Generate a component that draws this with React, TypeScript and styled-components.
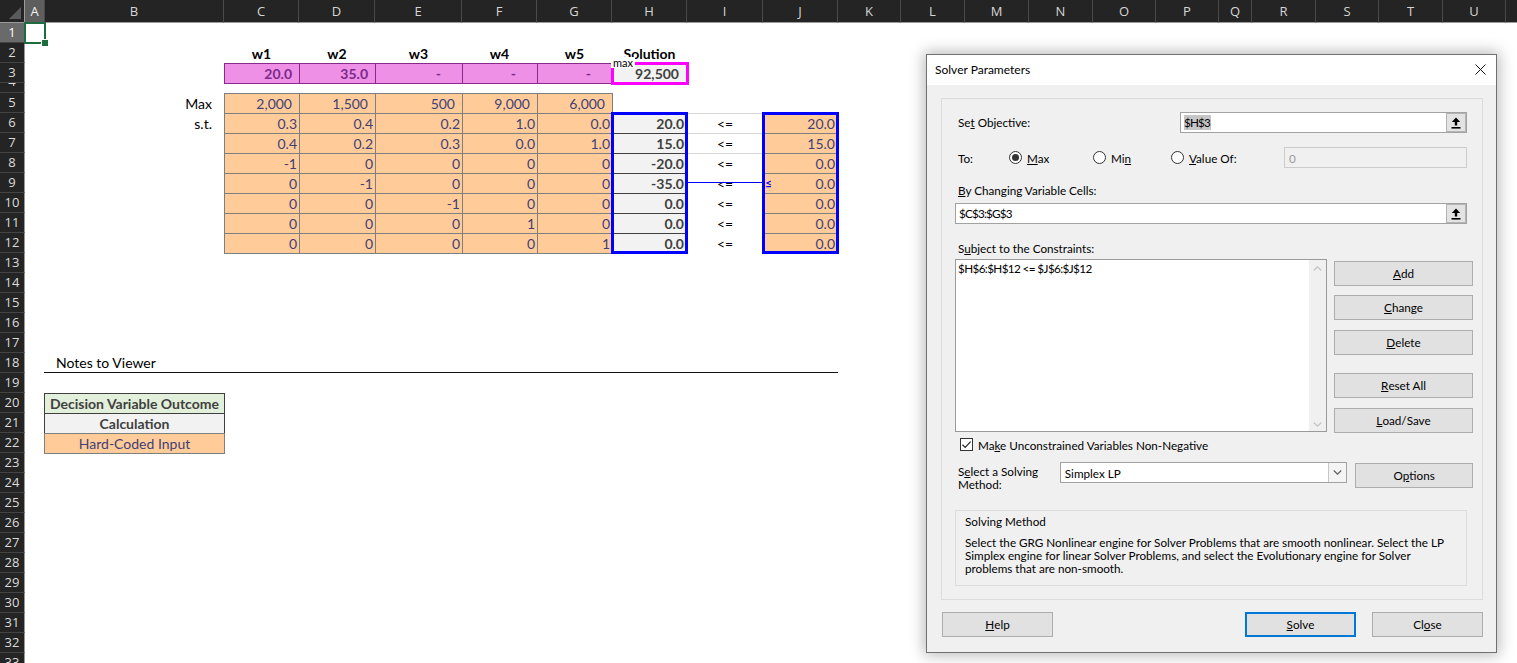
import React from "react";
import styled, { createGlobalStyle, css } from "styled-components";

const SHEET_FONT = `Lato, "Liberation Sans", sans-serif`;
const HEAD_FONT = `"Open Sans", "Noto Sans", sans-serif`;
const UI_FONT = `Lato, "Noto Sans", sans-serif`;

const COLS = ["A", "B", "C", "D", "E", "F", "G", "H", "I", "J", "K", "L", "M", "N", "O", "P", "Q", "R", "S", "T", "U", "V"];
const WIDTHS = [20, 179, 75, 76, 87, 75, 75, 75, 76, 75, 63, 64, 64, 64, 63, 63, 33, 64, 63, 64, 63, 64];
const ROWS = Array.from({ length: 33 }, (_, i) => i + 1);
const rowH = (r: number) => (r === 4 ? 10 : 20);
const colIndex = (c: string) => COLS.indexOf(c) + 2;

const GlobalStyle = createGlobalStyle`
  html, body { margin: 0; padding: 0; background: #fff; overflow: hidden; }
  body { font-family: ${SHEET_FONT}; }
  * { box-sizing: border-box; }
`;

type Pos = { $r: number; $c: string; $span?: number; $rows?: number };
const placed = css<Pos>`
  grid-row: ${(p) => p.$r + 1} / span ${(p) => p.$rows ?? 1};
  grid-column: ${(p) => colIndex(p.$c)} / span ${(p) => p.$span ?? 1};
`;

const Page = styled.div`
  position: relative;
  width: 1517px;
  height: 663px;
  overflow: hidden;
  background: #fff;
`;

const Sheet = styled.div`
  display: grid;
  grid-template-columns: 25px ${WIDTHS.map((w) => `${w}px`).join(" ")};
  grid-template-rows: 23px ${ROWS.map((r) => `${rowH(r)}px`).join(" ")};
  font-family: ${SHEET_FONT};
  font-size: 14px;
`;

const Corner = styled.div`
  grid-row: 1;
  grid-column: 1;
  background: #242424;
  border-right: 1px solid #9a9a9a;
  border-bottom: 1px solid #9a9a9a;
  display: flex;
  align-items: flex-end;
  justify-content: flex-end;
  padding: 0 3px 3px 0;
`;

const ColHeader = styled.div<{ $col: number; $active?: boolean }>`
  grid-row: 1;
  grid-column: ${(p) => p.$col};
  background: ${(p) => (p.$active ? "#5e5e5e" : "#242424")};
  color: ${(p) => (p.$active ? "#f2f2f2" : "#d6d6d6")};
  border-right: 1px solid #4a4a4a;
  border-bottom: 1px solid #9a9a9a;
  font-family: ${HEAD_FONT};
  font-size: 13px;
  display: flex;
  align-items: center;
  justify-content: center;
  overflow: hidden;
`;

const RowHeader = styled.div<{ $row: number; $active?: boolean; $tiny?: boolean }>`
  grid-row: ${(p) => p.$row};
  grid-column: 1;
  background: ${(p) => (p.$active ? "#6a6a6a" : "#242424")};
  color: ${(p) => (p.$active ? "#ffffff" : "#dcdcdc")};
  border-bottom: 1px solid #444;
  border-right: 1px solid #9a9a9a;
  font-family: ${HEAD_FONT};
  font-size: 13px;
  display: flex;
  justify-content: center;
  align-items: ${(p) => (p.$tiny ? "flex-end" : "center")};
  overflow: hidden;
  & > span {
    line-height: ${(p) => (p.$tiny ? "22px" : "19px")};
  }
`;

const ActiveCell = styled.div<Pos>`
  ${placed};
  margin: -1px -1px -1px -1px;
  border: 2px solid #1d6b3f;
  position: relative;
  z-index: 3;
  &::after {
    content: "";
    position: absolute;
    right: -5px;
    bottom: -5px;
    width: 6px;
    height: 6px;
    background: #1d6b3f;
    border: 1px solid #fff;
  }
`;

const ColTitle = styled.div<Pos>`
  ${placed};
  display: flex;
  align-items: center;
  justify-content: center;
  font-weight: 700;
  color: #000;
`;

const RowLabel = styled.div<Pos>`
  ${placed};
  display: flex;
  align-items: center;
  justify-content: flex-end;
  padding-right: 12px;
  color: #000;
`;

const boxCell = css<Pos & { $pad?: number }>`
  ${placed};
  margin: 0 -1px -1px 0;
  display: flex;
  align-items: center;
  justify-content: flex-end;
  padding-right: ${(p) => p.$pad ?? 3}px;
  white-space: nowrap;
`;

const DecisionCell = styled.div<Pos & { $pad?: number }>`
  ${boxCell};
  background: #ef90e7;
  border: 1px solid #8a2a88;
  color: #7a2a8a;
  font-weight: 700;
`;

const InputCell = styled.div<Pos & { $pad?: number }>`
  ${boxCell};
  background: #ffcc99;
  border: 1px solid #7f7f7f;
  color: #3f3f76;
`;

const CalcCell = styled.div<Pos & { $pad?: number }>`
  ${boxCell};
  background: #f2f2f2;
  border: 1px solid #3f3f3f;
  color: #3f3f3f;
  font-weight: 700;
`;

const OpCell = styled.div<Pos & { $lined?: boolean }>`
  ${placed};
  margin: 0 0 -1px 0;
  display: flex;
  align-items: center;
  justify-content: center;
  color: #000;
  border-top: 1px solid ${(p) => (p.$lined ? "#d6d6d6" : "transparent")};
  border-bottom: 1px solid ${(p) => (p.$lined ? "#d6d6d6" : "transparent")};
`;

const LeSign = styled.span`
  margin-right: auto;
  margin-left: 1px;
  color: #0000ff;
  font-weight: 700;
  font-size: 12px;
  line-height: 12px;
`;

const RangeFrame = styled.div<Pos & { $color: string; $wide?: boolean }>`
  ${placed};
  margin: ${(p) => (p.$wide ? "-1px -2px -2px -1px" : "-1px")};
  border: 3px solid ${(p) => p.$color};
  z-index: 2;
  pointer-events: none;
`;

const Connector = styled.div<Pos>`
  ${placed};
  align-self: center;
  height: 1px;
  margin-top: -1px;
  background: #0000ff;
  z-index: 3;
`;

const Tag = styled.div<Pos>`
  ${placed};
  align-self: start;
  justify-self: start;
  margin: -6px 0 0 -1px;
  padding: 0 2px;
  background: #fff;
  font-size: 11px;
  line-height: 11px;
  height: 11px;
  color: #000;
  z-index: 4;
`;

const NotesCell = styled.div<Pos>`
  ${placed};
  margin-left: -1px;
  border-bottom: 1px solid #111;
  display: flex;
  align-items: center;
  padding-left: 12px;
  color: #000;
`;

const legendKinds = {
  outcome: { bg: "#e2efda", border: "#3f3f3f", color: "#3f3f3f", weight: 700 },
  calc: { bg: "#f2f2f2", border: "#3f3f3f", color: "#3f3f3f", weight: 700 },
  input: { bg: "#ffcc99", border: "#7f7f7f", color: "#3f3f76", weight: 400 },
};

const LegendCell = styled.div<Pos & { $kind: keyof typeof legendKinds }>`
  ${placed};
  margin: 0 -1px -1px -1px;
  display: flex;
  align-items: center;
  justify-content: center;
  background: ${(p) => legendKinds[p.$kind].bg};
  border: 1px solid ${(p) => legendKinds[p.$kind].border};
  color: ${(p) => legendKinds[p.$kind].color};
  font-weight: ${(p) => legendKinds[p.$kind].weight};
  white-space: nowrap;
`;

/* ---------------- Dialog ---------------- */

const Dialog = styled.section`
  position: absolute;
  left: 926px;
  top: 54px;
  width: 571px;
  height: 599px;
  border: 1px solid #707070;
  background: #f0f0f0;
  box-shadow: 0 0 14px 2px rgba(0, 0, 0, 0.28);
  display: flex;
  flex-direction: column;
  font-family: ${UI_FONT};
  font-size: 11.7px;
  color: #000;
  z-index: 10;
`;

const TitleBar = styled.header`
  height: 30px;
  background: #fff;
  display: flex;
  align-items: center;
  justify-content: space-between;
  padding: 0 10px 2px 8px;
`;

const Title = styled.span`
  font-size: 12px;
`;

const DialogBody = styled.div`
  flex: 1;
  display: flex;
  flex-direction: column;
  padding: 13px 13px 0 14px;
`;

const Group = styled.div`
  height: 502px;
  border: 1px solid #dcdcdc;
  padding: 13px 9px 0 13px;
  display: flex;
  flex-direction: column;
`;

const ObjectiveRow = styled.div`
  display: grid;
  grid-template-columns: 225px 1fr;
  align-items: center;
  height: 21px;
  margin-right: 6px;
`;

const FieldLabel = styled.span`
  padding: 0 0 2px 3px;
  white-space: nowrap;
`;

const RefEdit = styled.div<{ $top?: number }>`
  height: 21px;
  margin-top: ${(p) => p.$top ?? 0}px;
  margin-right: ${(p) => (p.$top !== undefined ? 6 : 0)}px;
  background: #fff;
  border: 1px solid #a2a2a2;
  display: flex;
  align-items: center;
  padding-left: 3px;
`;

const RefText = styled.span<{ $selected?: boolean }>`
  flex: 1;
  display: flex;
  letter-spacing: -0.8px;
  & > span {
    background: ${(p) => (p.$selected ? "#c6c6c6" : "transparent")};
    line-height: 15px;
    padding-right: 1px;
  }
`;

const RefButton = styled.span`
  width: 20px;
  height: 19px;
  background: #e3e3e3;
  border: 1px solid #b4b4b4;
  display: flex;
  align-items: center;
  justify-content: center;
`;

const ToRow = styled.div`
  margin-top: 14px;
  height: 21px;
  display: flex;
  align-items: center;
  margin-right: 6px;
`;

const ToLabel = styled.span`
  width: 54px;
  padding-left: 3px;
`;

const RadioOption = styled.label<{ $w: number }>`
  width: ${(p) => p.$w}px;
  display: flex;
  align-items: center;
  gap: 5px;
  white-space: nowrap;
`;

const RadioDot = styled.span<{ $on?: boolean }>`
  width: 13px;
  height: 13px;
  border-radius: 50%;
  border: 1px solid #333;
  background: #fff;
  display: flex;
  align-items: center;
  justify-content: center;
  &::after {
    content: "";
    width: 7px;
    height: 7px;
    border-radius: 50%;
    background: ${(p) => (p.$on ? "#333" : "transparent")};
  }
`;

const DisabledInput = styled.div`
  flex: 1;
  height: 21px;
  border: 1px solid #cccccc;
  background: #f0f0f0;
  color: #9a9a9a;
  display: flex;
  align-items: center;
  padding-left: 4px;
`;

const SectionLabel = styled.div<{ $top: number }>`
  margin-top: ${(p) => p.$top}px;
  height: 16px;
  line-height: 16px;
  padding-left: 3px;
`;

const ConstraintArea = styled.div`
  margin-top: 3px;
  display: flex;
  gap: 7px;
  height: 175px;
`;

const ListBox = styled.div`
  width: 372px;
  height: 173px;
  background: #fff;
  border: 1px solid #9a9a9a;
  display: flex;
`;

const ListItems = styled.div`
  flex: 1;
  padding: 1px 0 0 2px;
  line-height: 15px;
  white-space: nowrap;
  letter-spacing: -0.6px;
`;

const ScrollTrack = styled.div`
  width: 17px;
  background: #f0f0f0;
  display: flex;
  flex-direction: column;
  justify-content: space-between;
  align-items: center;
  padding: 6px 0 4px;
`;

const ButtonColumn = styled.div`
  flex: 1;
  display: flex;
  flex-direction: column;
  padding-top: 2px;
`;

const Button = styled.button<{ $gap?: number; $focus?: boolean; $w?: number }>`
  height: 25px;
  width: ${(p) => (p.$w ? `${p.$w}px` : "100%")};
  margin-top: ${(p) => p.$gap ?? 0}px;
  background: #e1e1e1;
  border: ${(p) => (p.$focus ? "2px solid #0078d7" : "1px solid #adadad")};
  font-family: ${UI_FONT};
  font-size: 11.7px;
  color: #000;
  padding: 0 0 2px;
  display: flex;
  align-items: center;
  justify-content: center;
`;

const OptionsButton = styled(Button)`
  margin-left: 8px;
  margin-top: 1px;
`;

const CheckRow = styled.div`
  margin-top: 3px;
  height: 15px;
  display: flex;
  align-items: center;
  gap: 5px;
  padding-left: 5px;
`;

const CheckBox = styled.span`
  width: 13px;
  height: 13px;
  border: 1px solid #333;
  background: #fff;
  display: flex;
  align-items: center;
  justify-content: center;
`;

const MethodRow = styled.div`
  margin-top: 10px;
  display: flex;
  align-items: flex-start;
  height: 26px;
`;

const MethodLabel = styled.div`
  width: 105px;
  padding: 3px 0 0 3px;
  line-height: 13px;
`;

const Select = styled.div`
  width: 288px;
  height: 21px;
  background: #fff;
  border: 1px solid #a2a2a2;
  display: flex;
  align-items: center;
  padding-left: 4px;
`;

const SelectValue = styled.span`
  flex: 1;
`;

const SelectArrow = styled.span`
  width: 18px;
  height: 19px;
  border-left: 1px solid #c8c8c8;
  background: #f4f4f4;
  display: flex;
  align-items: center;
  justify-content: center;
`;

const InfoGroup = styled.div`
  margin-top: 22px;
  margin-right: 6px;
  height: 76px;
  border: 1px solid #dcdcdc;
  padding: 2px 0 0 9px;
`;

const InfoTitle = styled.div`
  line-height: 16px;
`;

const InfoText = styled.p`
  margin: 7px 0 0;
  line-height: 13px;
  white-space: nowrap;
`;

const Footer = styled.div`
  margin-top: 12px;
  display: flex;
  align-items: center;
  padding-left: 1px;
  gap: 16px;
`;

const Spacer = styled.span`
  flex: 1;
`;

const RefArrow = () => (
  <svg width="10" height="12" viewBox="0 0 10 12">
    <path d="M5 0.5 L9.2 5 L6.2 5 L6.2 8.5 L3.8 8.5 L3.8 5 L0.8 5 Z" fill="#000" />
    <rect x="0.5" y="10" width="9" height="1.6" fill="#000" />
  </svg>
);

const Chevron = ({ up, color }: { up?: boolean; color: string }) => (
  <svg width="9" height="5" viewBox="0 0 9 5">
    <path d={up ? "M0.8 4.5 L4.5 0.8 L8.2 4.5" : "M0.8 0.5 L4.5 4.2 L8.2 0.5"} fill="none" stroke={color} strokeWidth="1.2" />
  </svg>
);

const vars = ["w1", "w2", "w3", "w4", "w5"];
const varCols = ["C", "D", "E", "F", "G"];
const decision = ["20.0", "35.0", "-", "-", "-"];
const objective = ["2,000", "1,500", "500", "9,000", "6,000"];
const coeffs = [
  ["0.3", "0.4", "0.2", "1.0", "0.0"],
  ["0.4", "0.2", "0.3", "0.0", "1.0"],
  ["-1", "0", "0", "0", "0"],
  ["0", "-1", "0", "0", "0"],
  ["0", "0", "-1", "0", "0"],
  ["0", "0", "0", "1", "0"],
  ["0", "0", "0", "0", "1"],
];
const lhs = ["20.0", "15.0", "-20.0", "-35.0", "0.0", "0.0", "0.0"];
const rhs = ["20.0", "15.0", "0.0", "0.0", "0.0", "0.0", "0.0"];

export default function App() {
  return (
    <Page>
      <GlobalStyle />
      <Sheet>
        <Corner>
          <svg width="12" height="12" viewBox="0 0 12 12">
            <polygon points="12,0 12,12 0,12" fill="#5a5a5a" />
          </svg>
        </Corner>
        {COLS.map((c, i) => (
          <ColHeader key={c} $col={i + 2} $active={c === "A"}>
            {c}
          </ColHeader>
        ))}
        {ROWS.map((r) => (
          <RowHeader key={r} $row={r + 1} $active={r === 1} $tiny={r === 4}>
            <span>{r}</span>
          </RowHeader>
        ))}
        <ActiveCell $r={1} $c="A" />

        {vars.map((v, i) => (
          <ColTitle key={v} $r={2} $c={varCols[i]}>
            {v}
          </ColTitle>
        ))}
        <ColTitle $r={2} $c="H">Solution</ColTitle>

        {decision.map((v, i) => (
          <DecisionCell key={i} $r={3} $c={varCols[i]} $pad={v === "-" ? 21 : 7}>
            {v}
          </DecisionCell>
        ))}
        <CalcCell $r={3} $c="H" $pad={8}>92,500</CalcCell>
        <RangeFrame $r={3} $c="H" $color="#ff00ff" $wide />
        <Tag $r={3} $c="H">max</Tag>

        <RowLabel $r={5} $c="B">Max</RowLabel>
        {objective.map((v, i) => (
          <InputCell key={i} $r={5} $c={varCols[i]} $pad={7}>
            {v}
          </InputCell>
        ))}
        <RowLabel $r={6} $c="B">s.t.</RowLabel>
        {coeffs.map((row, ri) =>
          row.map((v, ci) => (
            <InputCell key={`${ri}-${ci}`} $r={6 + ri} $c={varCols[ci]} $pad={2}>
              {v}
            </InputCell>
          ))
        )}
        {lhs.map((v, i) => (
          <CalcCell key={i} $r={6 + i} $c="H" $pad={3}>
            {v}
          </CalcCell>
        ))}
        {lhs.map((_, i) => (
          <OpCell key={i} $r={6 + i} $c="I" $lined={i < 2}>
            &lt;=
          </OpCell>
        ))}
        {rhs.map((v, i) => (
          <InputCell key={i} $r={6 + i} $c="J" $pad={3}>
            {i === 3 && <LeSign>≤</LeSign>}
            {v}
          </InputCell>
        ))}
        <RangeFrame $r={6} $rows={7} $c="H" $color="#0000ff" />
        <RangeFrame $r={6} $rows={7} $c="J" $color="#0000ff" />
        <Connector $r={9} $c="I" />

        <NotesCell $r={18} $c="B" $span={9}>Notes to Viewer</NotesCell>
        <LegendCell $r={20} $c="B" $kind="outcome">Decision Variable Outcome</LegendCell>
        <LegendCell $r={21} $c="B" $kind="calc">Calculation</LegendCell>
        <LegendCell $r={22} $c="B" $kind="input">Hard-Coded Input</LegendCell>
      </Sheet>

      <Dialog>
        <TitleBar>
          <Title>Solver Parameters</Title>
          <svg width="11" height="11" viewBox="0 0 11 11">
            <path d="M0.5 0.5 L10.5 10.5 M10.5 0.5 L0.5 10.5" stroke="#111" strokeWidth="1" />
          </svg>
        </TitleBar>
        <DialogBody>
          <Group>
            <ObjectiveRow>
              <FieldLabel>
                Se<u>t</u> Objective:
              </FieldLabel>
              <RefEdit>
                <RefText $selected>
                  <span>$H$3</span>
                </RefText>
                <RefButton>
                  <RefArrow />
                </RefButton>
              </RefEdit>
            </ObjectiveRow>

            <ToRow>
              <ToLabel>To:</ToLabel>
              <RadioOption $w={84}>
                <RadioDot $on />
                <span>
                  <u>M</u>ax
                </span>
              </RadioOption>
              <RadioOption $w={78}>
                <RadioDot />
                <span>
                  Mi<u>n</u>
                </span>
              </RadioOption>
              <RadioOption $w={113}>
                <RadioDot />
                <span>
                  <u>V</u>alue Of:
                </span>
              </RadioOption>
              <DisabledInput>0</DisabledInput>
            </ToRow>

            <SectionLabel $top={14}>
              <u>B</u>y Changing Variable Cells:
            </SectionLabel>
            <RefEdit $top={5}>
              <RefText>
                <span>$C$3:$G$3</span>
              </RefText>
              <RefButton>
                <RefArrow />
              </RefButton>
            </RefEdit>

            <SectionLabel $top={16}>
              S<u>u</u>bject to the Constraints:
            </SectionLabel>
            <ConstraintArea>
              <ListBox>
                <ListItems>$H$6:$H$12 &lt;= $J$6:$J$12</ListItems>
                <ScrollTrack>
                  <Chevron up color="#c3c3c3" />
                  <Chevron color="#c3c3c3" />
                </ScrollTrack>
              </ListBox>
              <ButtonColumn>
                <Button>
                  <u>A</u>dd
                </Button>
                <Button $gap={9}>
                  <u>C</u>hange
                </Button>
                <Button $gap={10}>
                  <u>D</u>elete
                </Button>
                <Button $gap={18}>
                  <u>R</u>eset All
                </Button>
                <Button $gap={10}>
                  <u>L</u>oad/Save
                </Button>
              </ButtonColumn>
            </ConstraintArea>

            <CheckRow>
              <CheckBox>
                <svg width="11" height="11" viewBox="0 0 11 11">
                  <path d="M1.5 5.8 L4.2 8.4 L9.6 2.6" fill="none" stroke="#222" strokeWidth="1.2" />
                </svg>
              </CheckBox>
              <span>
                Ma<u>k</u>e Unconstrained Variables Non-Negative
              </span>
            </CheckRow>

            <MethodRow>
              <MethodLabel>
                S<u>e</u>lect a Solving
                <br />
                Method:
              </MethodLabel>
              <Select>
                <SelectValue>Simplex LP</SelectValue>
                <SelectArrow>
                  <Chevron color="#606060" />
                </SelectArrow>
              </Select>
              <OptionsButton $w={118}>
                O<u>p</u>tions
              </OptionsButton>
            </MethodRow>

            <InfoGroup>
              <InfoTitle>Solving Method</InfoTitle>
              <InfoText>
                Select the GRG Nonlinear engine for Solver Problems that are smooth nonlinear. Select the LP
                <br />
                Simplex engine for linear Solver Problems, and select the Evolutionary engine for Solver
                <br />
                problems that are non-smooth.
              </InfoText>
            </InfoGroup>
          </Group>

          <Footer>
            <Button $w={111}>
              <u>H</u>elp
            </Button>
            <Spacer />
            <Button $w={111} $focus>
              <u>S</u>olve
            </Button>
            <Button $w={111}>
              Cl<u>o</u>se
            </Button>
          </Footer>
        </DialogBody>
      </Dialog>
    </Page>
  );
}
